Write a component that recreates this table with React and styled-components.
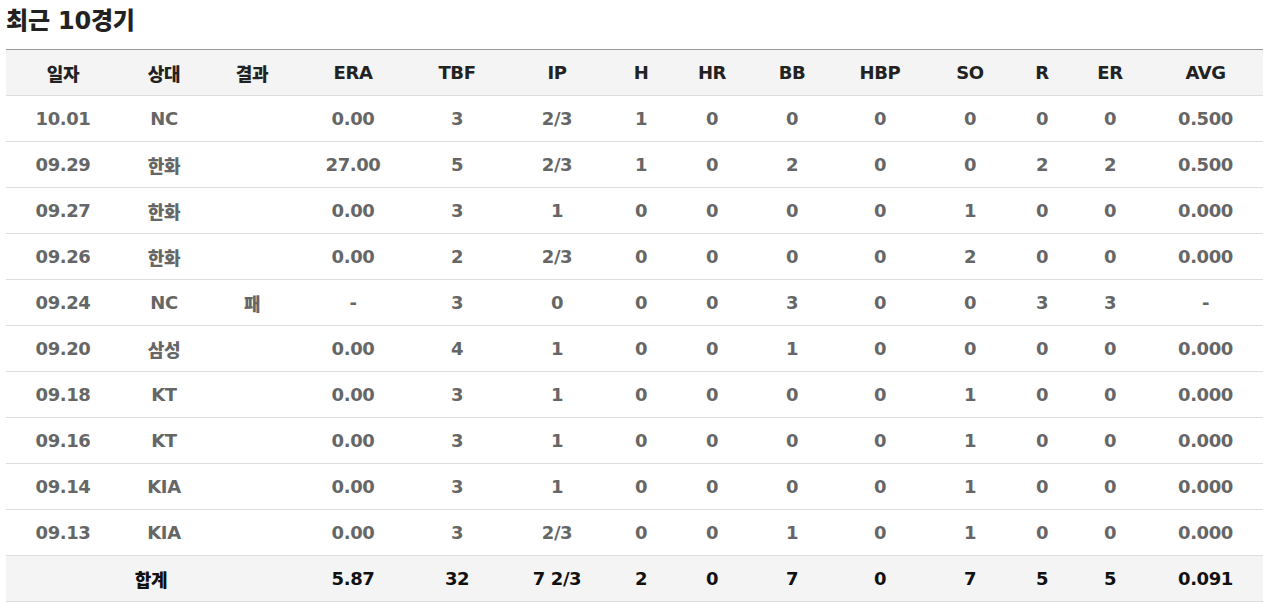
import * as React from "react";
import styled, { createGlobalStyle } from "styled-components";

const Global = createGlobalStyle`
  body {
    margin: 0;
    background: #fff;
    font-family: "DejaVu Sans", "Noto Sans CJK KR", sans-serif;
  }
`;

const columns = [
  { key: "date", label: "일자", width: 114 },
  { key: "opp", label: "상대", width: 88 },
  { key: "res", label: "결과", width: 88 },
  { key: "era", label: "ERA", width: 114 },
  { key: "tbf", label: "TBF", width: 94 },
  { key: "ip", label: "IP", width: 106 },
  { key: "h", label: "H", width: 62 },
  { key: "hr", label: "HR", width: 80 },
  { key: "bb", label: "BB", width: 80 },
  { key: "hbp", label: "HBP", width: 96 },
  { key: "so", label: "SO", width: 84 },
  { key: "r", label: "R", width: 60 },
  { key: "er", label: "ER", width: 76 },
  { key: "avg", label: "AVG", width: 115 },
];

const rows = [
  ["10.01", "NC", "", "0.00", "3", "2/3", "1", "0", "0", "0", "0", "0", "0", "0.500"],
  ["09.29", "한화", "", "27.00", "5", "2/3", "1", "0", "2", "0", "0", "2", "2", "0.500"],
  ["09.27", "한화", "", "0.00", "3", "1", "0", "0", "0", "0", "1", "0", "0", "0.000"],
  ["09.26", "한화", "", "0.00", "2", "2/3", "0", "0", "0", "0", "2", "0", "0", "0.000"],
  ["09.24", "NC", "패", "-", "3", "0", "0", "0", "3", "0", "0", "3", "3", "-"],
  ["09.20", "삼성", "", "0.00", "4", "1", "0", "0", "1", "0", "0", "0", "0", "0.000"],
  ["09.18", "KT", "", "0.00", "3", "1", "0", "0", "0", "0", "1", "0", "0", "0.000"],
  ["09.16", "KT", "", "0.00", "3", "1", "0", "0", "0", "0", "1", "0", "0", "0.000"],
  ["09.14", "KIA", "", "0.00", "3", "1", "0", "0", "0", "0", "1", "0", "0", "0.000"],
  ["09.13", "KIA", "", "0.00", "3", "2/3", "0", "0", "1", "0", "1", "0", "0", "0.000"],
];

const total = ["5.87", "32", "7 2/3", "2", "0", "7", "0", "7", "5", "5", "0.091"];

export default function App() {
  return (
    <Page>
      <Global />
      <Title>최근 10경기</Title>
      <Table>
        <colgroup>
          {columns.map((c) => (
            <col key={c.key} style={{ width: c.width }} />
          ))}
        </colgroup>
        <thead>
          <tr>
            {columns.map((c) => (
              <Th key={c.key}>{c.label}</Th>
            ))}
          </tr>
        </thead>
        <tbody>
          {rows.map((r, i) => (
            <tr key={i}>
              {r.map((v, j) => (
                <Td key={j}>{v}</Td>
              ))}
            </tr>
          ))}
        </tbody>
        <tfoot>
          <tr>
            <Tf colSpan={3}>합계</Tf>
            {total.map((v, j) => (
              <Tf key={j}>{v}</Tf>
            ))}
          </tr>
        </tfoot>
      </Table>
    </Page>
  );
}

const Page = styled.div`
  padding: 5px 8px 0 6px;
`;

const Title = styled.h3`
  margin: 0 0 11px;
  height: 33px;
  line-height: 33px;
  font-size: 24px;
  font-weight: 900;
  color: #222;
  letter-spacing: -0.2px;
`;

const Table = styled.table`
  width: 1257px;
  border-collapse: collapse;
  table-layout: fixed;
  border-top: 1px solid #999;
`;

const Cell = styled.td`
  height: 45px;
  padding: 0;
  text-align: center;
  font-size: 18px;
  font-weight: 900;
  letter-spacing: -0.4px;
  border-bottom: 1px solid #ddd;
`;

const Th = styled(Cell).attrs({ as: "th" })`
  background: #f4f4f4;
  color: #222;
`;

const Td = styled(Cell)`
  color: #666;
`;

const Tf = styled(Cell)`
  background: #f4f4f4;
  color: #111;
`;
